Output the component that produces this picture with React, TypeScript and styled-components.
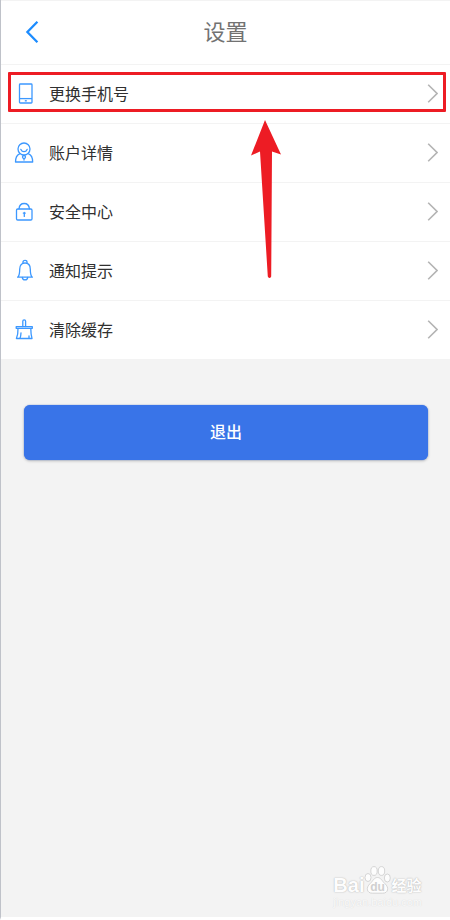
import React from "react";
import styled, { createGlobalStyle } from "styled-components";

const GlobalStyle = createGlobalStyle`
  *, *::before, *::after { box-sizing: border-box; }
  body {
    margin: 0;
    background: #f3f3f3;
    font-family: "Noto Sans CJK SC", "Noto Sans", sans-serif;
  }
`;

const Page = styled.div`
  display: flex;
  flex-direction: column;
  min-height: 100vh;
  border-left: 1px solid #bfc2c9;
  border-bottom: 3px solid #ffffff;
  background: #f3f3f3;
`;

const Header = styled.header`
  display: grid;
  grid-template-columns: 62px 1fr 62px;
  align-items: center;
  height: 64px;
  background: #ffffff;
  border-top: 1px solid #f3f3f3;
`;

const BackButton = styled.button`
  display: flex;
  align-items: center;
  justify-content: center;
  height: 44px;
  padding: 0 0 2px;
  border: 0;
  background: none;
  color: #1c8cff;
  cursor: pointer;
`;

const Title = styled.h1`
  margin: 0;
  padding-bottom: 6px;
  text-align: center;
  font-size: 22px;
  line-height: 32px;
  font-weight: 400;
  color: #727272;
`;

const List = styled.ul`
  margin: 0;
  padding: 0;
  list-style: none;
  background: #ffffff;
`;

const Item = styled.li`
  position: relative;
  border-top: 1px solid #f3f3f3;
`;

const Row = styled.button`
  display: flex;
  align-items: center;
  width: 100%;
  height: 58px;
  padding: 0 12px 0 11px;
  border: 0;
  background: none;
  font: inherit;
  font-size: 16px;
  line-height: 24px;
  color: #303030;
  text-align: left;
  cursor: pointer;
`;

const IconSlot = styled.span`
  display: flex;
  width: 24px;
  margin-right: 13px;
  padding-bottom: 2px;
  color: #3c98ff;
`;

const Label = styled.span`
  flex: 1;
  padding-bottom: 2px;
`;

const ChevronSlot = styled.span`
  display: flex;
  padding-bottom: 2px;
  color: #b4b4b4;
`;

const Highlight = styled.span`
  position: absolute;
  inset: 7px 4px 11px 7px;
  border: 3px solid #ed1c24;
  border-radius: 1px;
  pointer-events: none;
`;

const Pointer = styled.svg`
  position: absolute;
  z-index: 1;
  top: 55px;
  left: 248px;
  pointer-events: none;
`;

const Actions = styled.main`
  flex: 1;
  padding: 46px 22px 24px 23px;
`;

const LogoutButton = styled.button`
  display: block;
  width: 100%;
  height: 55px;
  padding: 0 0 4px;
  border: 0;
  border-radius: 6px;
  background: #3974e8;
  box-shadow: 0 0 1px #3974e8, 0 1px 3px rgba(0, 0, 0, 0.25);
  color: #ffffff;
  font: inherit;
  font-size: 16px;
  font-weight: 500;
  cursor: pointer;
`;

const Watermark = styled.footer`
  align-self: flex-end;
  margin: 0 28px 8px 0;
  color: #fdfdfd;
  text-shadow: 0 0 1px #b8b8b8, 0 0 2px #cccccc;
`;

const Brand = styled.div`
  display: flex;
  align-items: flex-end;
  height: 30px;
  font-family: "Liberation Sans", "Noto Sans CJK SC", sans-serif;
  font-size: 20px;
  font-weight: 700;
  line-height: 22px;
`;

const Paw = styled.svg`
  display: block;
  margin-bottom: 2px;
`;

const BrandSuffix = styled.span`
  font-family: "Noto Sans CJK SC", sans-serif;
  font-size: 15px;
`;

const Address = styled.div`
  font-family: "Liberation Sans", sans-serif;
  font-size: 11px;
  line-height: 13px;
  text-align: center;
  color: #fafafa;
  text-shadow: 0 0 1px #d0d0d0;
`;

const PhoneIcon = () => (
  <svg width="24" height="24" viewBox="0 0 24 24" fill="none" stroke="currentColor">
    <rect x="7.5" y="3" width="12.5" height="19" rx="0.8" strokeWidth="1.3" />
    <path d="M7.5 17.6H20" strokeWidth="1.3" />
    <path d="M12.8 19.8h2" strokeWidth="1.4" />
  </svg>
);

const UserIcon = () => (
  <svg width="24" height="24" viewBox="0 0 24 24" fill="none" stroke="currentColor" strokeWidth="1.3" strokeLinecap="round" strokeLinejoin="round">
    <circle cx="12" cy="9" r="6" />
    <path d="M8.9 9.4c1.3 3 4.9 3 6.2 0" />
    <path d="M7.6 13.8C4.6 15 3.5 17.4 3.5 22h17.2c0-4.6-1.1-7-4.1-8.2" />
    <circle cx="12" cy="17" r="1.5" />
    <path d="M12 18.6V20" />
  </svg>
);

const LockIcon = () => (
  <svg width="24" height="24" viewBox="0 0 24 24" fill="none" stroke="currentColor" strokeWidth="1.3" strokeLinecap="round" strokeLinejoin="round">
    <rect x="4.5" y="10" width="15.5" height="11" rx="1.2" />
    <path d="M7 9.8C7.3 6.4 9.1 4.5 12.2 4.5s4.9 1.9 5.2 5.3" />
    <path d="M12.3 13.4v4M11.3 14.1h2" />
  </svg>
);

const BellIcon = () => (
  <svg width="24" height="24" viewBox="0 0 24 24" fill="none" stroke="currentColor" strokeWidth="1.3" strokeLinecap="round" strokeLinejoin="round">
    <path d="M11 5V4c0-2.1 4-2.1 4 0v1" />
    <path d="M5.6 19.2c1.8-1.2 2.1-3 2.1-8 0-4 1.9-6.2 5.3-6.2s5.3 2.2 5.3 6.2c0 5 .3 6.8 2.1 8z" />
    <path d="M10.3 19.4c.2 3.3 5.2 3.3 5.4 0" />
  </svg>
);

const BrushIcon = () => (
  <svg width="24" height="24" viewBox="0 0 24 24" fill="none" stroke="currentColor" strokeWidth="1.3" strokeLinecap="round" strokeLinejoin="round">
    <path d="M10.8 9.5V4.2c0-1.9 2.8-1.9 2.8 0v5.3" />
    <path d="M4.2 9.7h16.1v1.6H4.2z" />
    <path d="M6 11.6c.1 3.9-.3 6.9-1.6 9.9H20c-.8-3-1.2-6-1.2-9.9" />
    <path d="M9 15.8c-.1 2.4-.4 4.1-1 5.4M17 19v2.2" />
  </svg>
);

const Chevron = () => (
  <svg width="14" height="20" viewBox="0 0 14 20" fill="none" stroke="currentColor" strokeWidth="1.6">
    <path d="M4.2 1.8 13 10.5 4.2 19.2" />
  </svg>
);

const items = [
  { label: "更换手机号", Icon: PhoneIcon, highlighted: true },
  { label: "账户详情", Icon: UserIcon },
  { label: "安全中心", Icon: LockIcon },
  { label: "通知提示", Icon: BellIcon },
  { label: "清除缓存", Icon: BrushIcon },
];

export default function App() {
  return (
    <>
      <GlobalStyle />
      <Page>
        <Header>
          <BackButton type="button" aria-label="返回">
            <svg width="16" height="24" viewBox="0 0 16 24" fill="none" stroke="currentColor" strokeWidth="2.3">
              <path d="M13.4 1.8 3.4 12l10 10.2" />
            </svg>
          </BackButton>
          <Title>设置</Title>
        </Header>
        <List>
          {items.map(({ label, Icon, highlighted }) => (
            <Item key={label}>
              <Row type="button">
                <IconSlot>
                  <Icon />
                </IconSlot>
                <Label>{label}</Label>
                <ChevronSlot>
                  <Chevron />
                </ChevronSlot>
              </Row>
              {highlighted && (
                <>
                  <Highlight />
                  <Pointer width="32" height="159" viewBox="0 0 32 159" fill="#ed1c24" aria-hidden="true">
                    <path d="M16 0 32 34.5 23 31.5 22.2 156.5q-1.6 3-3.4 0L11 31.5 2 35.5z" />
                  </Pointer>
                </>
              )}
            </Item>
          ))}
        </List>
        <Actions>
          <LogoutButton type="button">退出</LogoutButton>
        </Actions>
        <Watermark>
          <Brand>
            <span>Bai</span>
            <Paw width="27" height="28" viewBox="0 0 27 28" fill="#fdfdfd" stroke="#cccccc" strokeWidth="0.8">
              <ellipse cx="4" cy="11.5" rx="3" ry="4" />
              <ellipse cx="10" cy="5" rx="3.2" ry="4.4" />
              <ellipse cx="17.5" cy="5" rx="3.2" ry="4.4" />
              <ellipse cx="23.3" cy="12" rx="3" ry="4" />
              <path d="M13.5 11.5c3.5 0 4.6 3.6 7.3 6 4.8 4.2 3.2 9.7-2 9.7H8.2c-5.2 0-6.8-5.5-2-9.7 2.7-2.4 3.8-6 7.3-6z" />
              <text x="13.5" y="25" textAnchor="middle" fontFamily="Liberation Sans, sans-serif" fontSize="12" fontWeight="700" fill="#d0d0d0" stroke="none" style={{ textShadow: "none" }}>du</text>
            </Paw>
            <BrandSuffix>经验</BrandSuffix>
          </Brand>
          <Address>jingyan.baidu.com</Address>
        </Watermark>
      </Page>
    </>
  );
}
